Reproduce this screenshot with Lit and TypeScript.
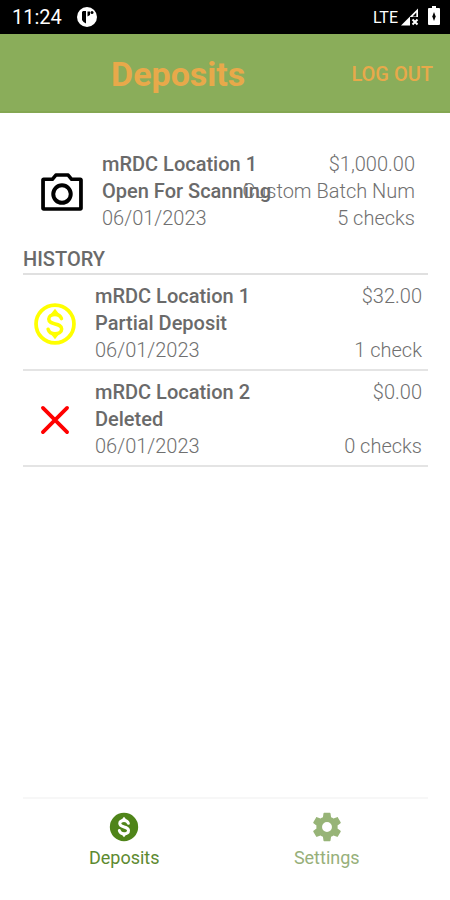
import { LitElement, html, css, svg } from "lit";
import { customElement, property } from "lit/decorators.js";

const dollar = (color: string, width: number) => svg`
  <path fill="none" stroke=${color} stroke-width=${width} stroke-linecap="round"
    d="M15.100 9.400C14.700 8.100 13.600 7.400 12 7.400c-1.700 0-3 .8-3 2.200 0 3.300 6.200 1.500 6.200 4.800 0 1.500-1.400 2.300-3.200 2.300-1.700 0-2.900-.8-3.300-2.200"/>
  <path fill=${color} d="M12 4.700l2.200 2.700H9.800zM12 19.300l2.200-2.700H9.800z"/>`;

const icons: Record<string, unknown> = {
  camera: svg`<path fill="#000" d="M20.800 5H17l-1.400-1.700A.9.9 0 0 0 15 3H9a.9.9 0 0 0-.6.3L7 5H3.200C2.500 5 2 5.500 2 6.200v13.600c0 .7.500 1.200 1.200 1.200h17.600c.7 0 1.200-.5 1.200-1.200V6.200c0-.7-.5-1.200-1.200-1.200zM20.200 19.300H3.800V6.700h4l1.700-2h5l1.700 2h4z"/><circle cx="12" cy="13" r="4.200" fill="none" stroke="#000" stroke-width="1.900"/>`,
  coin: svg`<circle cx="12" cy="12" r="9.100" fill="none" stroke="#ff0" stroke-width="1.800"/>${dollar("#ff0", 1.7)}`,
  cross: svg`<path fill="none" stroke="#f00" stroke-width="1.800" stroke-linecap="round" d="M6.200 6.200l11.600 11.600M17.800 6.200L6.200 17.800"/>`,
  deposits: svg`<circle cx="12" cy="12" r="10" fill="#4f8419"/>${dollar("#fff", 2.1)}`,
  settings: svg`<path fill="#97b477" d="M19.430 12.980c.04-.32.07-.64.07-.98s-.03-.66-.07-.98l2.110-1.650c.19-.15.24-.42.12-.64l-2-3.460c-.12-.22-.39-.3-.61-.22l-2.490 1c-.52-.4-1.080-.73-1.690-.98l-.38-2.650C14.460 2.180 14.250 2 14 2h-4c-.25 0-.46.18-.49.42l-.38 2.650c-.61.25-1.170.59-1.690.98l-2.490-1c-.23-.09-.49 0-.61.22l-2 3.460c-.13.22-.07.49.12.64l2.110 1.650c-.04.32-.07.65-.07.98s.03.66.07.98l-2.110 1.650c-.19.15-.24.42-.12.64l2 3.460c.12.22.39.3.61.22l2.490-1c.52.4 1.080.73 1.690.98l.38 2.650c.03.24.24.42.49.42h4c.25 0 .46-.18.49-.42l.38-2.650c.61-.25 1.170-.59 1.690-.98l2.490 1c.23.09.49 0 .61-.22l2-3.460c.12-.22.07-.49-.12-.64zM12 15.500a3.500 3.500 0 1 1 0-7 3.500 3.500 0 0 1 0 7z"/>`,
};

const icon = (name: string) =>
  html`<svg viewBox="0 0 24 24" aria-hidden="true">${icons[name]}</svg>`;

interface Deposit {
  icon: string;
  location: string;
  status: string;
  date: string;
  amount: string;
  batch: string;
  checks: string;
}

@customElement("deposit-row")
class DepositRow extends LitElement {
  @property({ attribute: false }) item!: Deposit;

  static styles = css`
    :host {
      display: flex;
      align-items: center;
      gap: 15px;
      padding: 8px 6px 5px 7px;
      font-size: 20px;
      line-height: 27px;
      color: #707070;
    }
    svg {
      display: block;
      flex: none;
      width: 50px;
      height: 50px;
    }
    .facts {
      flex: 1;
      display: grid;
      grid-template-columns: repeat(2, minmax(0, 1fr));
      grid-auto-rows: 27px;
      white-space: nowrap;
    }
    .strong {
      font-weight: 500;
      color: #6a6a6a;
    }
    .light {
      font-weight: 300;
    }
    .end {
      display: flex;
      justify-content: flex-end;
    }
  `;

  render() {
    const d = this.item;
    return html`
      ${icon(d.icon)}
      <div class="facts">
        <span class="strong">${d.location}</span>
        <span class="light end">${d.amount}</span>
        <span class="strong">${d.status}</span>
        <span class="light end">${d.batch}</span>
        <span class="light">${d.date}</span>
        <span class="light end">${d.checks}</span>
      </div>
    `;
  }
}

@customElement("app-root")
class AppRoot extends LitElement {
  static styles = css`
    :host {
      display: flex;
      flex-direction: column;
      min-height: 100vh;
      background: #fff;
      font-family: Roboto, "Liberation Sans", sans-serif;
    }
    .status {
      display: flex;
      align-items: center;
      height: 34px;
      padding: 0 10px 0 12px;
      background: #000;
      color: #fff;
    }
    .clock {
      font-size: 20px;
    }
    .app-mark {
      width: 20px;
      height: 20px;
      margin-left: 15px;
    }
    .network {
      margin-left: auto;
      font-size: 16px;
    }
    .signal {
      width: 20px;
      height: 20px;
      margin-left: 2px;
    }
    .battery {
      width: 12px;
      height: 20px;
      margin-left: 8px;
      margin-bottom: 2px;
    }
    header {
      display: flex;
      align-items: center;
      height: 79px;
      padding: 2px 17px 0;
      box-sizing: border-box;
      border-bottom: 2px solid #84a752;
      background: #8aad5a;
      color: #e8a94a;
    }
    h1 {
      flex: 1;
      margin: 0;
      padding-right: 12px;
      font-size: 34px;
      font-weight: 700;
      text-align: center;
    }
    .logout {
      padding: 0;
      border: 0;
      background: none;
      color: inherit;
      font: 500 20px Roboto, sans-serif;
      text-transform: uppercase;
    }
    main {
      flex: 1;
      padding: 30px 22px 0 23px;
    }
    .current {
      padding: 0 7px;
    }
    h2 {
      margin: 0;
      padding-top: 8px;
      border-bottom: 2px solid #e0e0e0;
      color: #6a6a6a;
      font-size: 20px;
      line-height: 28px;
      font-weight: 500;
    }
    ul {
      list-style: none;
      margin: 0;
      padding: 0;
    }
    li {
      border-bottom: 2px solid #e4e4e4;
    }
    nav {
      display: flex;
      margin: 0 22px 0 23px;
      height: 103px;
      box-sizing: border-box;
      border-top: 2px solid #f7f7f7;
    }
    nav a {
      flex: 1;
      display: flex;
      flex-direction: column;
      align-items: center;
      padding-top: 11px;
      gap: 3px;
      font-size: 18px;
      line-height: 22px;
      color: #97b07a;
      text-decoration: none;
    }
    nav a.active {
      color: #5d8a30;
    }
    nav svg {
      width: 34px;
      height: 34px;
    }
  `;

  private current: Deposit = {
    icon: "camera",
    location: "mRDC Location 1",
    status: "Open For Scanning",
    date: "06/01/2023",
    amount: "$1,000.00",
    batch: "Custom Batch Num",
    checks: "5 checks",
  };

  private past: Deposit[] = [
    {
      icon: "coin",
      location: "mRDC Location 1",
      status: "Partial Deposit",
      date: "06/01/2023",
      amount: "$32.00",
      batch: "",
      checks: "1 check",
    },
    {
      icon: "cross",
      location: "mRDC Location 2",
      status: "Deleted",
      date: "06/01/2023",
      amount: "$0.00",
      batch: "",
      checks: "0 checks",
    },
  ];

  render() {
    return html`
      <div class="status">
        <span class="clock">11:24</span>
        <svg class="app-mark" viewBox="0 0 20 20" aria-hidden="true">
          <circle cx="10" cy="10" r="10" fill="#fff" />
          <path d="M6 4h3v12.500l-2.500-1.500L5 13V5z" fill="#000" />
          <path d="M10.500 4.500H13V8l-2.500 1.500z" fill="#000" />
          <circle cx="15" cy="5.500" r="1.500" fill="#000" />
        </svg>
        <span class="network">LTE</span>
        <svg class="signal" viewBox="0 0 20 20" aria-hidden="true">
          <path d="M1 18.500L18 1.500V10H10v8.500z" fill="#fff" />
          <path d="M12.500 9.500L16.300 5.500v4z" fill="#000" />
          <path d="M12.500 12.500l5 5M17.500 12.500l-5 5" stroke="#fff" stroke-width="2" />
        </svg>
        <svg class="battery" viewBox="0 0 12 20" aria-hidden="true">
          <path d="M4 0h4v2h3a1 1 0 0 1 1 1v15a1 1 0 0 1-1 1H1a1 1 0 0 1-1-1V3a1 1 0 0 1 1-1h3z" fill="#fff" />
          <path d="M6 6l1.700 4.500L6 15l-1.700-4.500z" fill="#000" />
        </svg>
      </div>
      <header>
        <h1>Deposits</h1>
        <button class="logout" type="button">Log out</button>
      </header>
      <main>
        <div class="current"><deposit-row .item=${this.current}></deposit-row></div>
        <h2>HISTORY</h2>
        <ul>
          ${this.past.map((d) => html`<li><deposit-row .item=${d}></deposit-row></li>`)}
        </ul>
      </main>
      <nav>
        <a class="active" href="#deposits">${icon("deposits")}<span>Deposits</span></a>
        <a href="#settings">${icon("settings")}<span>Settings</span></a>
      </nav>
    `;
  }
}
